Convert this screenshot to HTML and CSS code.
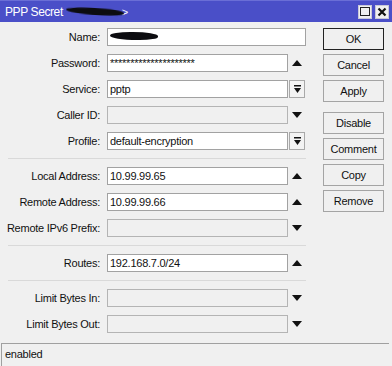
FILE: index.html
```html
<!DOCTYPE html>
<html lang="en">
<head>
  <meta charset="UTF-8">
  <title>PPP Secret</title>
  <link rel="stylesheet" href="styles.css">
</head>
<body>

  <div class="window">
    <!-- Title bar -->
    <div class="titlebar">
      <span class="title">PPP Secret</span>
      <span class="redact title-redact"></span>
      <span class="chev">&gt;</span>
      <div class="win-btns">
        <span class="wbtn max"><span class="max-box"></span></span>
        <span class="wbtn close">
          <svg width="10" height="10" viewBox="0 0 10 10"><path d="M1.5 1.5 L8.5 8.5 M8.5 1.5 L1.5 8.5" stroke="#111" stroke-width="2.2"/></svg>
        </span>
      </div>
    </div>

    <div class="content">
      <!-- Fields -->
      <div class="form">
        <div class="row">
          <label>Name:</label>
          <div class="field wide"><span class="redact name-redact"></span></div>
        </div>
        <div class="row">
          <label>Password:</label>
          <div class="field">*********************</div>
          <span class="slot"><span class="tri up"></span></span>
        </div>
        <div class="row">
          <label>Service:</label>
          <div class="field">pptp</div>
          <span class="drop">
            <svg width="9" height="9" viewBox="0 0 9 9"><rect x="1" y="0" width="7" height="1.5" fill="#111"/><path d="M1 3 H8 L4.5 8 Z" fill="#111"/></svg>
          </span>
        </div>
        <div class="row">
          <label>Caller ID:</label>
          <div class="field off"></div>
          <span class="slot"><span class="tri down"></span></span>
        </div>
        <div class="row">
          <label>Profile:</label>
          <div class="field">default-encryption</div>
          <span class="drop">
            <svg width="9" height="9" viewBox="0 0 9 9"><rect x="1" y="0" width="7" height="1.5" fill="#111"/><path d="M1 3 H8 L4.5 8 Z" fill="#111"/></svg>
          </span>
        </div>

        <div class="sep"></div>

        <div class="row">
          <label>Local Address:</label>
          <div class="field">10.99.99.65</div>
          <span class="slot"><span class="tri up"></span></span>
        </div>
        <div class="row">
          <label>Remote Address:</label>
          <div class="field">10.99.99.66</div>
          <span class="slot"><span class="tri up"></span></span>
        </div>
        <div class="row">
          <label>Remote IPv6 Prefix:</label>
          <div class="field off"></div>
          <span class="slot"><span class="tri down"></span></span>
        </div>

        <div class="sep"></div>

        <div class="row">
          <label>Routes:</label>
          <div class="field">192.168.7.0/24</div>
          <span class="slot"><span class="tri up"></span></span>
        </div>

        <div class="sep"></div>

        <div class="row">
          <label>Limit Bytes In:</label>
          <div class="field off"></div>
          <span class="slot"><span class="tri down"></span></span>
        </div>
        <div class="row">
          <label>Limit Bytes Out:</label>
          <div class="field off"></div>
          <span class="slot"><span class="tri down"></span></span>
        </div>
      </div>

      <!-- Buttons -->
      <div class="buttons">
        <button class="btn default">OK</button>
        <button class="btn">Cancel</button>
        <button class="btn">Apply</button>
        <button class="btn spaced">Disable</button>
        <button class="btn">Comment</button>
        <button class="btn">Copy</button>
        <button class="btn">Remove</button>
      </div>
    </div>

    <div class="status">enabled</div>
  </div>

</body>
</html>
```

FILE: styles.css
```css
* { box-sizing: border-box; margin: 0; padding: 0; }

body {
  font-family: 'Liberation Sans', Arial, sans-serif;
  font-size: 11px;
  letter-spacing: -0.25px;
  color: #111;
  background: #f0f0f0;
  width: 392px;
  height: 366px;
  overflow: hidden;
}

.window {
  height: 366px;
  display: flex;
  flex-direction: column;
}

/* title bar */
.titlebar {
  height: 22px;
  background: #4a4fc8;
  border-top: 1px solid #6a6ed6;
  display: flex;
  align-items: center;
  padding-left: 5px;
  color: #fff;
  font-size: 12px;
  letter-spacing: -0.4px;
}

.title { margin-right: 3px; }

.redact {
  display: inline-block;
  background: #0c0c10;
  border-radius: 45% 55% 40% 60%;
  filter: blur(0.5px);
}

.title-redact {
  width: 58px;
  height: 7px;
  transform: rotate(3deg);
}

.chev { font-size: 11px; margin-left: -2px; }

.win-btns {
  margin-left: auto;
  margin-right: 3px;
  display: flex;
  gap: 3px;
}

.wbtn {
  width: 14px;
  height: 14px;
  background: #f0f0f0;
  border: 1px solid #c8c8d8;
  display: flex;
  align-items: center;
  justify-content: center;
}

.max-box {
  width: 10px;
  height: 9px;
  border: 1px solid #222;
}

/* body */
.content {
  flex: 1;
  display: flex;
}

.form {
  width: 306px;
  padding-top: 6px;
  display: flex;
  flex-direction: column;
  gap: 8px;
}

.row {
  display: flex;
  align-items: center;
  height: 18px;
}

.row label {
  width: 101px;
  padding-right: 1px;
  text-align: right;
  margin-right: 6px;
  white-space: nowrap;
}

.field {
  width: 181px;
  height: 18px;
  background: #fff;
  border: 1px solid #a2a2a2;
  padding: 0 2px;
  line-height: 16px;
  white-space: nowrap;
  overflow: hidden;
}

.field.wide { width: 199px; }

.field.off {
  background: #f0f0f0;
  border-color: #b4b4b4;
}

.name-redact {
  width: 48px;
  height: 8px;
  margin-top: 3px;
  vertical-align: top;
}

.slot {
  width: 17px;
  display: flex;
  justify-content: center;
}

.tri {
  width: 0;
  height: 0;
  border-left: 5px solid transparent;
  border-right: 5px solid transparent;
}

.tri.up { border-bottom: 6px solid #111; }
.tri.down { border-top: 6px solid #111; }

.drop {
  width: 16px;
  height: 18px;
  margin-left: 1px;
  border: 1px solid #a9a9a9;
  background: #f3f3f3;
  display: flex;
  align-items: center;
  justify-content: center;
}

.sep {
  height: 1px;
  margin-left: 8px;
  background: #d9d9d9;
}

.buttons {
  margin-left: 17px;
  padding-top: 6px;
  width: 61px;
  display: flex;
  flex-direction: column;
  gap: 4px;
}

.btn {
  height: 22px;
  font: inherit;
  letter-spacing: inherit;
  color: #111;
  background: #f0f0f0;
  border: 1px solid #a4a4a4;
}

.btn.default { border-color: #222; }

.btn.spaced { margin-top: 6px; }

/* status bar */
.status {
  height: 23px;
  margin: 0 3px 0 1px;
  border-top: 1px solid #a0a0a0;
  border-left: 1px solid #a0a0a0;
  padding-left: 3px;
  line-height: 21px;
}
```
